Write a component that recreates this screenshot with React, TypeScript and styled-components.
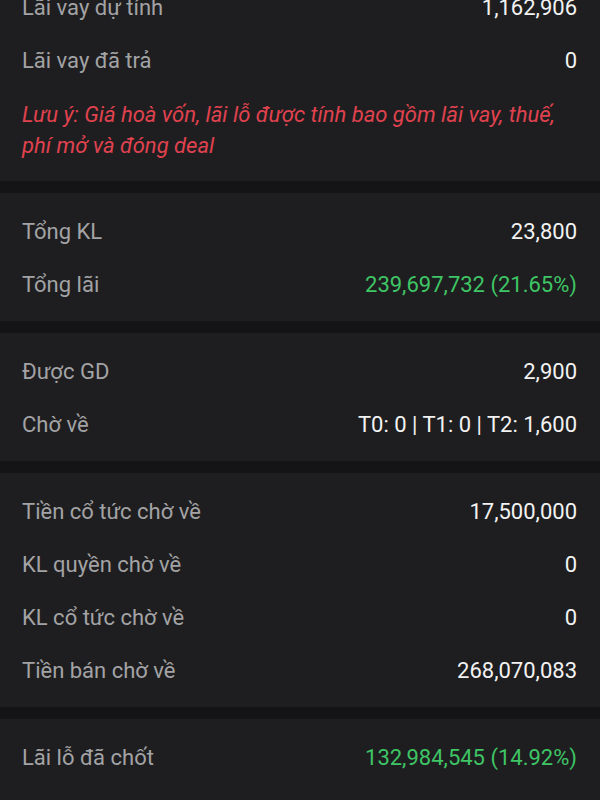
import React from "react";
import styled, { createGlobalStyle } from "styled-components";

const Global = createGlobalStyle`
  html, body {
    margin: 0;
    padding: 0;
    background: #141416;
    overflow: hidden;
  }
  body {
    font-family: Roboto, "Noto Sans", "Liberation Sans", sans-serif;
    -webkit-font-smoothing: antialiased;
  }
`;

const Screen = styled.div`
  width: 600px;
  height: 800px;
  overflow: hidden;
  background: #141416;
`;

const List = styled.div`
  display: flex;
  flex-direction: column;
  gap: 12px;
  margin-top: -19px;
`;

const Section = styled.section<{ $padTop?: number; $padBottom?: number }>`
  background: #1e1e20;
  padding: ${(p) => p.$padTop ?? 11}px 23px ${(p) => p.$padBottom ?? 10}px 22px;
  display: flex;
  flex-direction: column;
`;

const Row = styled.div`
  height: 53px;
  display: flex;
  align-items: center;
  justify-content: space-between;
  font-size: 22px;
`;

const Label = styled.span`
  color: #a3a3a5;
`;

const Value = styled.span<{ $tone?: "up" | "plain" }>`
  color: ${(p) => (p.$tone === "up" ? "#3ec565" : "#f2f2f2")};
`;

const Note = styled.p`
  margin: 12px 0 0;
  color: #e0424f;
  font-style: italic;
  font-size: 22px;
  line-height: 31px;
`;

type Item = { label: string; value: string; tone?: "up" | "plain" };

const groups: Item[][] = [
  [
    { label: "Tổng KL", value: "23,800" },
    { label: "Tổng lãi", value: "239,697,732 (21.65%)", tone: "up" },
  ],
  [
    { label: "Được GD", value: "2,900" },
    { label: "Chờ về", value: "T0: 0 | T1: 0 | T2: 1,600" },
  ],
  [
    { label: "Tiền cổ tức chờ về", value: "17,500,000" },
    { label: "KL quyền chờ về", value: "0" },
    { label: "KL cổ tức chờ về", value: "0" },
    { label: "Tiền bán chờ về", value: "268,070,083" },
  ],
  [{ label: "Lãi lỗ đã chốt", value: "132,984,545 (14.92%)", tone: "up" }],
];

const Rows = ({ items }: { items: Item[] }) => (
  <>
    {items.map((it) => (
      <Row key={it.label}>
        <Label>{it.label}</Label>
        <Value $tone={it.tone}>{it.value}</Value>
      </Row>
    ))}
  </>
);

export default function App() {
  return (
    <Screen>
      <Global />
      <List>
        <Section $padTop={0} $padBottom={20}>
          <Rows
            items={[
              { label: "Lãi vay dự tính", value: "1,162,906" },
              { label: "Lãi vay đã trả", value: "0" },
            ]}
          />
          <Note>
            Lưu ý: Giá hoà vốn, lãi lỗ được tính bao gồm lãi vay, thuế, phí mở và đóng deal
          </Note>
        </Section>
        {groups.map((g, i) => (
          <Section key={i} $padTop={12} $padBottom={i === groups.length - 1 ? 40 : 10}>
            <Rows items={g} />
          </Section>
        ))}
      </List>
    </Screen>
  );
}
